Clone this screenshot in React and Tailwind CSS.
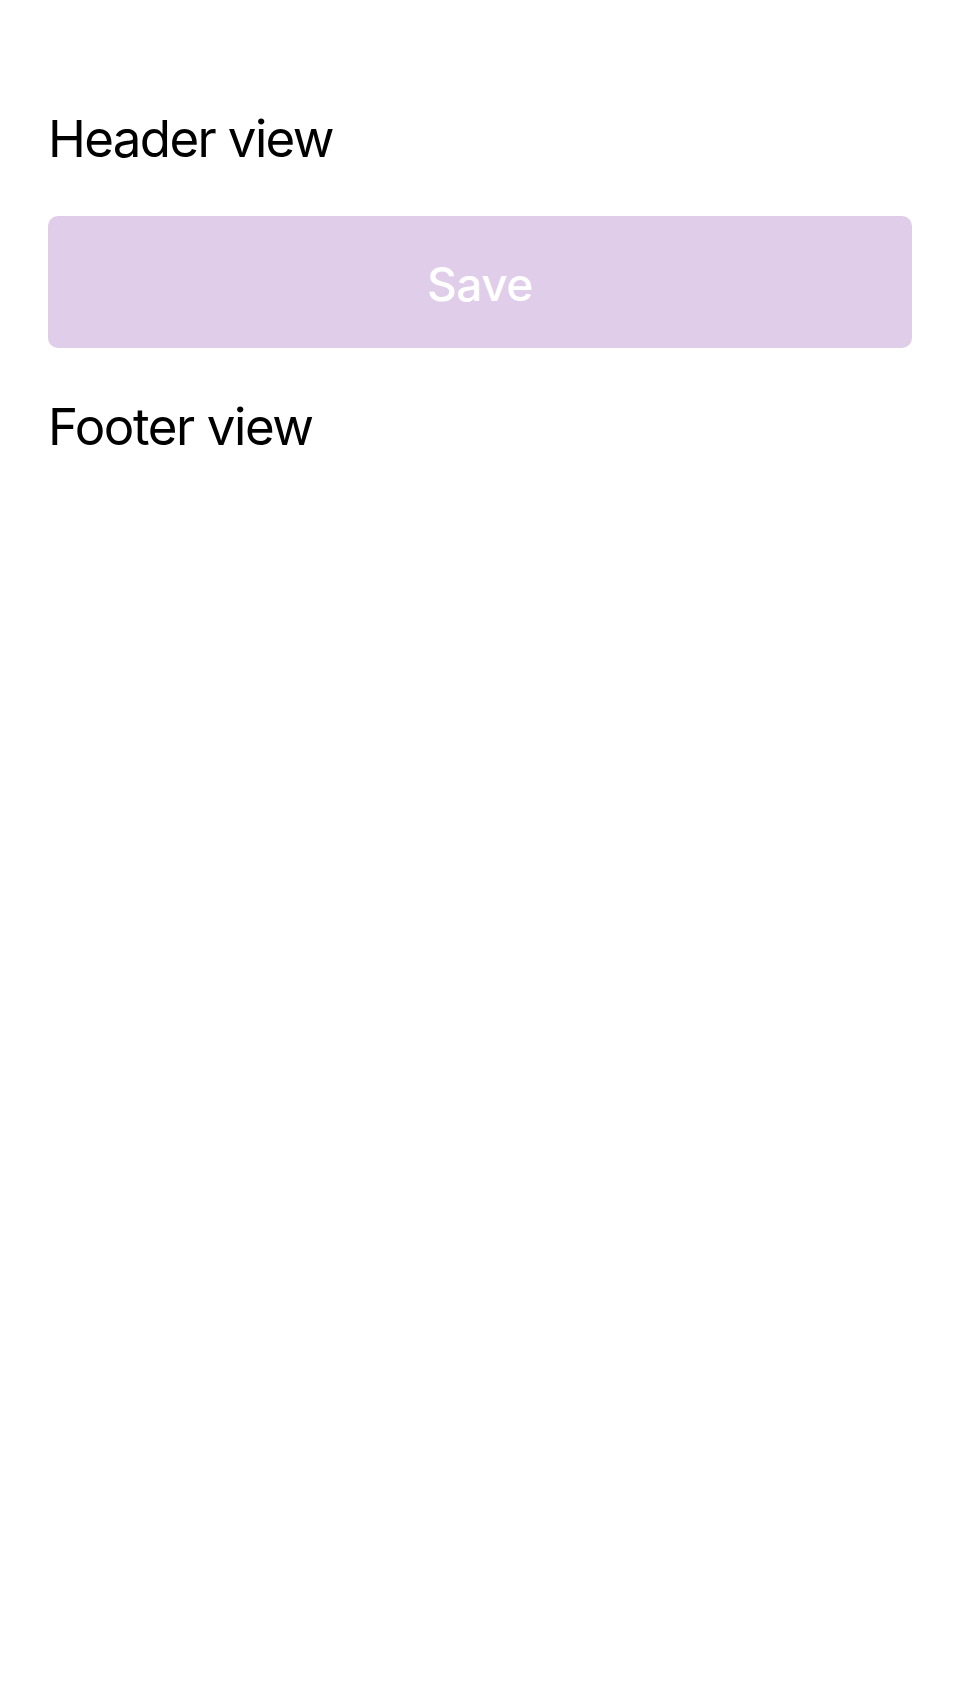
const App = () => {
  return (
    <div className="w-full min-h-[1704px] bg-white px-[48px] pt-[108px] font-['Inter',sans-serif] text-black">
      <h1 className="text-[51px] leading-[62px] font-normal tracking-[-0.032em]">
        Header view
      </h1>
      <button
        type="button"
        className="mt-[46px] w-full h-[132px] pt-[4px] flex items-center justify-center rounded-[10px] bg-[#e0cdea] text-white text-[46px] font-medium tracking-[-0.01em]">
        Save
      </button>
      <p className="mt-[48px] text-[51px] leading-[62px] font-normal tracking-[-0.028em]">
        Footer view
      </p>
    </div>
  );
};

export default App;
